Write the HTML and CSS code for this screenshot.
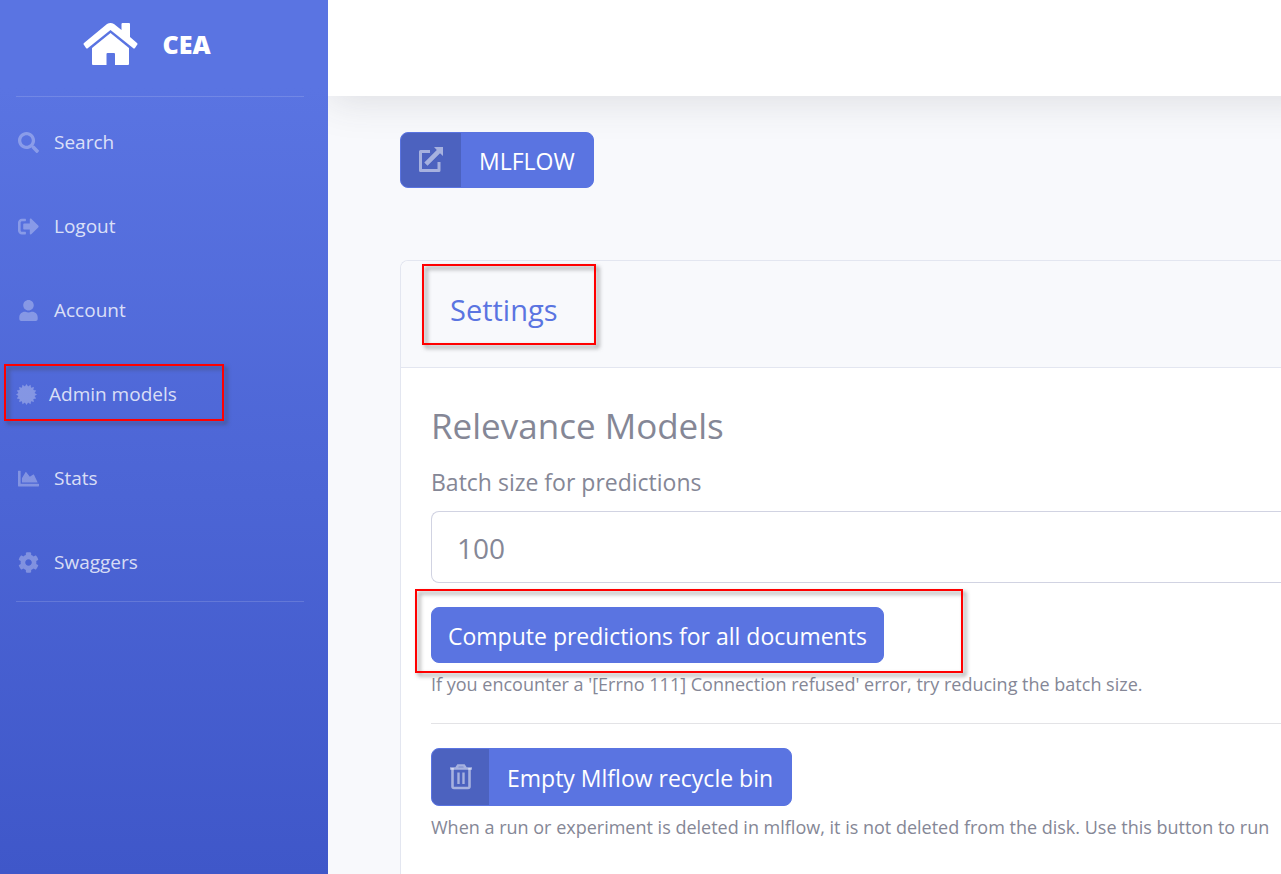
FILE: index.html
```html
<!DOCTYPE html>
<html lang="en">
<head>
<meta charset="utf-8">
<meta name="viewport" content="width=device-width, initial-scale=1">
<title>CEA - Admin models</title>
<link rel="stylesheet" href="styles.css">
</head>
<body>
<div class="layout">
  <aside class="sidebar">
    <a class="brand" href="#">
      <svg class="brand-icon" viewBox="0 0 55 42" aria-hidden="true"><path d="M1 20L24 1Q27.500-1 31 1L38.500 7V1Q38.500 0 39.500 0H46Q47 0 47 1V14L54 20Q55 21 54 22L52 25Q51 26 50 25L27.500 7L5 25Q4 26 3 25L1 22Q0 21 1 20ZM9 25L27.500 10L46 25V41Q46 42 45 42H32V31Q32 30 31 30H24.500Q23.500 30 23.500 31V42H10Q9 42 9 41Z"/></svg>
      <span>CEA</span>
    </a>
    <nav class="nav">
      <a class="nav-link" href="#">
        <svg class="nav-icon" viewBox="0 0 512 512" aria-hidden="true"><path d="M505 442.700L405.300 343c-4.500-4.500-10.600-7-17-7H372c27.600-35.300 44-79.700 44-128C416 93.100 322.900 0 208 0S0 93.100 0 208s93.100 208 208 208c48.300 0 92.700-16.400 128-44v16.300c0 6.400 2.500 12.500 7 17l99.700 99.700c9.400 9.400 24.600 9.400 33.900 0l28.300-28.300c9.400-9.400 9.400-24.600.1-34zM208 336c-70.700 0-128-57.200-128-128 0-70.700 57.200-128 128-128 70.700 0 128 57.200 128 128 0 70.700-57.200 128-128 128z"/></svg>
        <span>Search</span>
      </a>
      <a class="nav-link" href="#">
        <svg class="nav-icon" viewBox="0 0 512 512" aria-hidden="true"><path d="M497 273L329 441c-15 15-41 4.500-41-17v-96H152c-13.300 0-24-10.700-24-24v-96c0-13.300 10.700-24 24-24h136V88c0-21.400 25.900-32 41-17l168 168c9.300 9.400 9.300 24.600 0 34zM192 436v-40c0-6.600-5.400-12-12-12H96c-17.700 0-32-14.300-32-32V160c0-17.700 14.300-32 32-32h84c6.600 0 12-5.400 12-12V76c0-6.600-5.400-12-12-12H96c-53 0-96 43-96 96v192c0 53 43 96 96 96h84c6.600 0 12-5.400 12-12z"/></svg>
        <span>Logout</span>
      </a>
      <a class="nav-link" href="#">
        <svg class="nav-icon" viewBox="-32 0 512 512" aria-hidden="true"><path d="M224 256c70.700 0 128-57.300 128-128S294.700 0 224 0 96 57.300 96 128s57.300 128 128 128zm89.600 32h-16.700c-22.200 10.200-46.900 16-72.900 16s-50.600-5.800-72.900-16h-16.700C60.200 288 0 348.200 0 422.400V464c0 26.500 21.500 48 48 48h352c26.500 0 48-21.500 48-48v-41.600c0-74.200-60.200-134.400-134.400-134.400z"/></svg>
        <span>Account</span>
      </a>
      <a class="nav-link nav-link-marked" href="#">
        <svg class="nav-icon" viewBox="0 0 20 20" aria-hidden="true"><path d="M20 10L17.650 11.520L19.240 13.830L16.490 14.330L17.070 17.070L14.330 16.490L13.830 19.240L11.520 17.650L10 20L8.480 17.650L6.170 19.240L5.670 16.490L2.930 17.070L3.510 14.330L.76 13.830L2.350 11.520L0 10L2.350 8.480L.76 6.170L3.510 5.670L2.930 2.930L5.670 3.510L6.170 .76L8.480 2.350L10 0L11.520 2.350L13.830 .76L14.330 3.510L17.070 2.930L16.490 5.670L19.240 6.170L17.650 8.480Z"/></svg>
        <span>Admin models</span>
        <i class="marker marker-nav"></i>
      </a>
      <a class="nav-link" href="#">
        <svg class="nav-icon" viewBox="0 0 512 512" aria-hidden="true"><path d="M500 384c6.600 0 12 5.400 12 12v40c0 6.600-5.400 12-12 12H12c-6.600 0-12-5.400-12-12V76c0-6.600 5.400-12 12-12h40c6.600 0 12 5.400 12 12v308h436zM372.700 159.500L288 216l-85.300-113.700c-5.100-6.800-15.500-6.300-19.900 1L96 248v104h384l-89.900-187.800c-3.200-6.500-11.400-8.700-17.400-4.700z"/></svg>
        <span>Stats</span>
      </a>
      <a class="nav-link" href="#">
        <svg class="nav-icon" viewBox="0 0 512 512" aria-hidden="true"><path d="M487.400 315.700l-42.600-24.600c4.300-23.200 4.300-47 0-70.200l42.600-24.600c4.900-2.800 7.100-8.600 5.500-14-11.100-35.600-30-67.800-54.700-94.600-3.800-4.100-10-5.100-14.800-2.300L380.800 110c-17.900-15.400-38.500-27.300-60.800-35.100V25.800c0-5.600-3.900-10.500-9.400-11.700-36.700-8.200-74.300-7.800-109.200 0-5.500 1.200-9.400 6.100-9.400 11.700V75c-22.200 7.900-42.800 19.800-60.800 35.100L88.700 85.500c-4.900-2.800-11-1.900-14.800 2.300-24.700 26.700-43.600 58.900-54.700 94.600-1.700 5.400.6 11.200 5.500 14L67.300 221c-4.300 23.200-4.300 47 0 70.200l-42.600 24.600c-4.900 2.800-7.100 8.600-5.500 14 11.100 35.600 30 67.800 54.700 94.600 3.800 4.100 10 5.100 14.800 2.300l42.600-24.600c17.900 15.400 38.500 27.300 60.800 35.100v49.200c0 5.600 3.900 10.500 9.400 11.700 36.700 8.200 74.300 7.800 109.200 0 5.500-1.200 9.400-6.100 9.400-11.700v-49.200c22.200-7.900 42.800-19.800 60.800-35.100l42.600 24.600c4.900 2.800 11 1.900 14.800-2.300 24.700-26.700 43.600-58.900 54.700-94.600 1.500-5.500-.7-11.300-5.600-14.100zM256 336c-44.100 0-80-35.900-80-80s35.900-80 80-80 80 35.900 80 80-35.900 80-80 80z"/></svg>
        <span>Swaggers</span>
      </a>
    </nav>
  </aside>
  <div class="content">
    <header class="topbar"></header>
    <main class="page">
      <a class="btn btn-split" href="#">
        <span class="btn-icon btn-icon-wide"><svg viewBox="0 0 26 26" aria-hidden="true"><path d="M12 4.500H2.500V23.500H21V15" fill="none" stroke="currentColor" stroke-width="3" stroke-linejoin="round"/><path d="M16 0H25V9L22 6.200L9.500 18.700L6.300 15.500L18.800 3Z"/></svg></span>
        <span class="btn-text">MLFLOW</span>
      </a>
      <section class="card">
        <div class="card-header">
          <h2 class="card-title">Settings</h2>
          <i class="marker marker-title"></i>
        </div>
        <form class="card-body">
          <h3 class="section-title">Relevance Models</h3>
          <label class="label" for="batch">Batch size for predictions</label>
          <input class="input" id="batch" type="text" value="100">
          <div class="action">
            <button class="btn btn-plain" type="button">Compute predictions for all documents</button>
            <i class="marker marker-action"></i>
          </div>
          <p class="hint">If you encounter a '[Errno 111] Connection refused' error, try reducing the batch size.</p>
          <hr class="rule">
          <button class="btn btn-split btn-tall" type="button">
            <span class="btn-icon"><svg viewBox="-2 0 26 26" aria-hidden="true"><g fill="none" stroke="currentColor"><path d="M2.500 4V22.500Q2.500 24 4 24H18Q19.500 24 19.500 22.500V4" stroke-width="2.600"/><path d="M0 4.500H22M6 4.500L8 1.500H14L16 4.500" stroke-width="2.400"/><path d="M8.500 8.500V20M13.500 8.500V20" stroke-width="2.400"/></g></svg></span>
            <span class="btn-text">Empty Mlflow recycle bin</span>
          </button>
          <p class="hint">When a run or experiment is deleted in mlflow, it is not deleted from the disk. Use this button to run</p>
        </form>
      </section>
    </main>
  </div>
</div>
</body>
</html>
```
FILE: styles.css
```css
* {
  box-sizing: border-box;
}

body {
  margin: 0;
  background: #f8f9fc;
  color: #858796;
  font-family: "Segoe UI", "Open Sans", "Noto Sans", sans-serif;
  font-size: 23px;
  line-height: 32px;
}

h2, h3, p {
  margin: 0;
  font-weight: 400;
}

a {
  color: inherit;
  text-decoration: none;
}

svg {
  display: block;
  fill: currentColor;
}

.layout {
  display: flex;
  min-height: 100vh;
}

.sidebar {
  flex: 0 0 328px;
  padding: 0 24px 0 16px;
  background: linear-gradient(180deg, #5a74e2 10%, #3f57c9 100%);
  color: #fff;
}

.brand {
  display: flex;
  align-items: center;
  justify-content: center;
  gap: 24px;
  height: 96px;
  padding: 0 26px 8px 0;
  font-size: 25px;
  font-weight: 800;
}

.brand-icon {
  width: 55px;
  height: 42px;
}

.nav {
  display: flex;
  flex-direction: column;
  gap: 32px;
  padding: 19px 0 13px;
  border-top: 1px solid rgba(255, 255, 255, 0.15);
  border-bottom: 1px solid rgba(255, 255, 255, 0.15);
}

.nav-link {
  display: flex;
  align-items: center;
  gap: 15px;
  height: 52px;
  padding-left: 2px;
  color: rgba(255, 255, 255, 0.8);
  font-size: 19px;
}

.nav-link-marked {
  position: relative;
  gap: 12px;
  padding-left: 0;
}

.nav-icon {
  width: 21px;
  height: 21px;
  color: #fff;
  opacity: 0.3;
}

.marker {
  position: absolute;
  border: 2px solid #f00;
  filter: drop-shadow(3px 3px 2px rgba(60, 60, 60, 0.6));
  pointer-events: none;
}

.marker-nav {
  top: -4px;
  left: -12px;
  width: 220px;
  height: 57px;
}

.marker-title {
  top: 3px;
  left: 21px;
  width: 174px;
  height: 81px;
}

.marker-action {
  top: -18px;
  left: -16px;
  width: 548px;
  height: 84px;
}

.content {
  display: flex;
  flex: 1;
  flex-direction: column;
  min-width: 0;
  overflow: hidden;
}

.topbar {
  height: 96px;
  margin-right: -48px;
  background: #fff;
  box-shadow: 0 4px 42px rgba(58, 59, 69, 0.15);
}

.page {
  display: flex;
  flex: 1;
  flex-direction: column;
  align-items: flex-start;
  padding: 36px 0 0 72px;
}

.btn {
  display: inline-flex;
  align-items: stretch;
  height: 56px;
  padding: 0;
  border: 1px solid #5a74e1;
  border-radius: 8px;
  background: #5a74e1;
  color: #fff;
  font: inherit;
  white-space: nowrap;
  overflow: hidden;
}

.btn-tall {
  height: 58px;
}

.btn-plain {
  align-items: center;
  padding: 2px 16px 0;
}

.btn-icon {
  display: flex;
  align-items: center;
  justify-content: center;
  width: 57px;
  background: rgba(0, 0, 0, 0.15);
  color: rgba(255, 255, 255, 0.5);
}

.btn-icon-wide {
  width: 60px;
}

.btn-icon svg {
  width: 26px;
  height: 26px;
}

.btn-text {
  display: flex;
  align-items: center;
  padding: 2px 18px 0;
}

.card {
  flex: 1;
  align-self: stretch;
  margin-top: 72px;
  border: 1px solid #e3e6f0;
  border-width: 1px 0 0 1px;
  border-radius: 8px 0 0 0;
  background: #fff;
}

.card-header {
  position: relative;
  padding: 28px 49px 36px;
  border-bottom: 1px solid #e3e6f0;
  border-radius: 8px 0 0 0;
  background: #f8f9fc;
}

.card-title {
  color: #5a74e1;
  font-size: 29px;
  line-height: 42px;
}

.card-body {
  display: flex;
  flex-direction: column;
  align-items: flex-start;
  padding: 34px 0 0 30px;
}

.section-title {
  margin-bottom: 16px;
  font-size: 35px;
  line-height: 48px;
}

.label {
  margin-bottom: 13px;
}

.input {
  align-self: stretch;
  height: 72px;
  padding: 2px 25px 0;
  border: 1px solid #d1d3e2;
  border-right: 0;
  border-radius: 8px 0 0 8px;
  background: #fff;
  color: #858796;
  font: inherit;
  font-size: 28px;
}

.action {
  position: relative;
  margin: 24px 0 7px;
}

.action .btn {
  display: flex;
}

.hint {
  align-self: stretch;
  font-size: 18px;
  line-height: 28px;
  white-space: nowrap;
}

.rule {
  align-self: stretch;
  margin: 25px 0 24px;
  border: 0;
  border-top: 1px solid #e3e3e6;
}

.btn-tall + .hint {
  margin-top: 7px;
}
```
